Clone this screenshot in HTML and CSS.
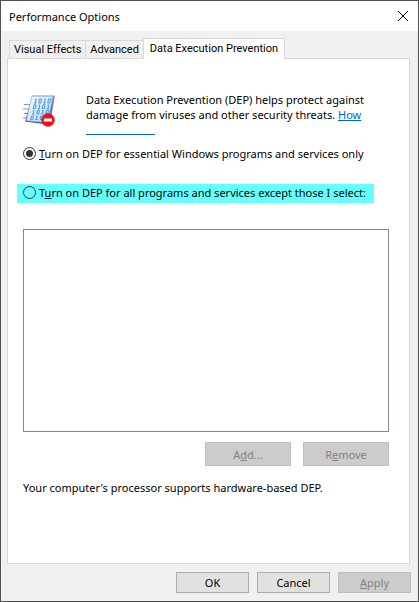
FILE: index.html
```html
<!DOCTYPE html>
<html lang="en">
<head>
<meta charset="utf-8">
<meta name="viewport" content="width=device-width, initial-scale=1">
<title>Performance Options</title>
<link rel="stylesheet" href="styles.css">
</head>
<body>
<div class="window">
	<header class="titlebar">
		<h1>Performance Options</h1>
		<button type="button" class="close" aria-label="Close">
			<svg width="10" height="10" viewBox="0 0 10 10"><path d="M0 0L10 10M10 0L0 10" stroke="#000" fill="none"/></svg>
		</button>
	</header>
	<nav class="tabs" role="tablist">
		<button type="button" class="tab" role="tab">Visual Effects</button>
		<button type="button" class="tab" role="tab">Advanced</button>
		<button type="button" class="tab active" role="tab" aria-selected="true">Data Execution Prevention</button>
	</nav>
	<main class="panel">
		<div class="intro">
			<svg class="dep-icon" width="34" height="34" viewBox="0 0 34 34">
				<defs>
					<linearGradient id="sheet" x1="0" y1="0" x2="1" y2="1">
						<stop offset="0" stop-color="#f4fbff"/>
						<stop offset="1" stop-color="#b4d6f8"/>
					</linearGradient>
					<linearGradient id="edge" x1="0" y1="0" x2="0" y2="1">
						<stop offset="0" stop-color="#8a97c6"/>
						<stop offset="1" stop-color="#3c58a8"/>
					</linearGradient>
				</defs>
				<path d="M1 9.500H9M0 14H8M1 18.500H7M0 23H6" stroke="#8b959e" fill="none"/>
				<path d="M9 .500H32L27 29L24 29.500L2 26.500Z" fill="url(#edge)"/>
				<path d="M9 1.500H29.500L24.500 27.500L3.500 25.500Z" fill="url(#sheet)" stroke="#a6c9e8" stroke-width=".6"/>
				<!-- rows of bits -->
				<g fill="none" stroke="#4a9be2" stroke-width="1">
					<path d="M12 4.500L13.200 4L12.400 8M11 8H13.500M16.500 4H18.500L17.800 8H15.700ZM21 4.500L22.200 4L21.400 8M20 8H22.500M25.500 4H27.500L26.800 8H24.700Z"/>
					<path d="M11 9.800H13L12.300 13.500H10.300ZM15.500 10.300L16.700 9.800L16 13.500M14.700 13.500H17M20 9.800H22L21.300 13.500H19.300ZM24.500 10.300L25.700 9.800L25 13.500M23.700 13.500H26"/>
					<path d="M9.800 15.700L11 15.200L10.200 19M9 19H11.500M14.500 15.200H16.500L15.800 19H13.800ZM19 15.700L20.200 15.200L19.400 19M18 19H20.500M23.500 15.200H25.500L24.800 19H22.800Z"/>
					<path d="M8.500 21H10.500L9.700 24.500H7.700ZM13 21.500L14.200 21L13.500 24.500M12.200 24.500H14.700M17.700 21H19.700L19 24.500H17Z"/>
				</g>
				<circle cx="25" cy="25" r="6.500" fill="#f01018" stroke="#c9252c" stroke-width=".5"/>
				<path d="M21 23.500H29V26.500H21Z" fill="#fff"/>
			</svg>
			<div>
				<p>Data Execution Prevention (DEP) helps protect against damage from viruses and other security threats. <a href="#">How</a></p>
				<a href="#" class="link-rest" aria-label="How does it work?"></a>
			</div>
		</div>
		<div class="option">
			<input type="radio" name="dep" id="depEssential" checked>
			<label for="depEssential"><u>T</u>urn on DEP for essential Windows programs and services only</label>
		</div>
		<div class="option highlight">
			<input type="radio" name="dep" id="depAll">
			<label for="depAll">T<u>u</u>rn on DEP for all programs and services except those I select:</label>
		</div>
		<select class="program-list" size="10" aria-label="Programs"></select>
		<div class="list-buttons">
			<button type="button" class="btn" disabled>A<u>d</u>d...</button>
			<button type="button" class="btn" disabled>R<u>e</u>move</button>
		</div>
		<p class="status">Your computer's processor supports hardware-based DEP.</p>
	</main>
	<footer class="actions">
		<button type="button" class="btn">OK</button>
		<button type="button" class="btn">Cancel</button>
		<button type="button" class="btn" disabled><u>A</u>pply</button>
	</footer>
</div>
</body>
</html>
```

FILE: styles.css
```css
*{
	box-sizing: border-box;
	margin: 0;
	padding: 0;
}
body, button{
	color: #000;
	font-family: "Noto Sans", "Open Sans", sans-serif;
	font-size: 11px;
	line-height: 15px;
}
.window{
	background: #f0f0f0;
	border: 1px solid #505050;
	display: flex;
	flex-direction: column;
	min-height: 100vh;
}
.titlebar{
	align-items: center;
	background: #fff;
	display: flex;
	height: 30px;
	justify-content: space-between;
	padding: 0 10px 0 8px;
}
h1{
	font-size: 11px;
	font-weight: normal;
}
.close{
	background: none;
	border: none;
	display: flex;
}
.tabs{
	align-items: flex-end;
	display: flex;
	padding: 7px 8px 0;
}
.tab{
	background: #f0f0f0;
	border: 1px solid #d9d9d9;
	border-bottom: none;
	font-family: Roboto, sans-serif;
	height: 18px;
	padding: 0 4px;
	white-space: nowrap;
}
.tab + .tab{
	border-left: none;
}
.tab.active{
	background: #fff;
	border-left: 1px solid #d9d9d9;
	height: 21px;
	margin: 0 0 -1px -1px;
	padding: 0 6px 2px;
	position: relative;
}
.panel{
	background: #fff;
	border: 1px solid #d9d9d9;
	display: flex;
	flex: 1;
	flex-direction: column;
	margin: 0 8px 0 6px;
	padding: 33px 20px 68px 15px;
}
.intro{
	display: flex;
	gap: 29px;
	height: 46px;
}
.dep-icon{
	flex: none;
	margin-top: 3px;
}
a{
	color: #0066cc;
}
.link-rest{
	border-bottom: 1px solid #0066cc;
	display: block;
	height: 13px;
	width: 69px;
}
.option{
	align-items: center;
	display: flex;
	gap: 3px;
	height: 19px;
	margin-top: 7px;
	padding-bottom: 2px;
}
.highlight{
	align-self: flex-start;
	background: #66ffff;
	margin: 20px 0 0 -6px;
	padding: 0 8px 2px 6px;
}
.option input{
	appearance: none;
	border: 1px solid #333;
	border-radius: 50%;
	flex: none;
	height: 13px;
	width: 13px;
}
.option input:checked{
	background: #333;
	background-clip: content-box;
	padding: 2px;
}
.program-list{
	appearance: none;
	background: #fff;
	border: 1px solid #828790;
	border-radius: 0;
	flex: 1;
	margin-top: 26px;
	width: 100%;
}
.list-buttons{
	display: flex;
	gap: 12px;
	justify-content: flex-end;
	margin: 10px 0 14px;
}
.btn{
	background: #e1e1e1;
	border: 1px solid #adadad;
	height: 21px;
	width: 73px;
}
.btn:disabled{
	background: #ccc;
	border-color: #bfbfbf;
	color: #838383;
}
.list-buttons .btn{
	height: 24px;
	width: 86px;
}
.actions{
	display: flex;
	gap: 8px;
	justify-content: flex-end;
	padding: 8px 7px;
}
```
